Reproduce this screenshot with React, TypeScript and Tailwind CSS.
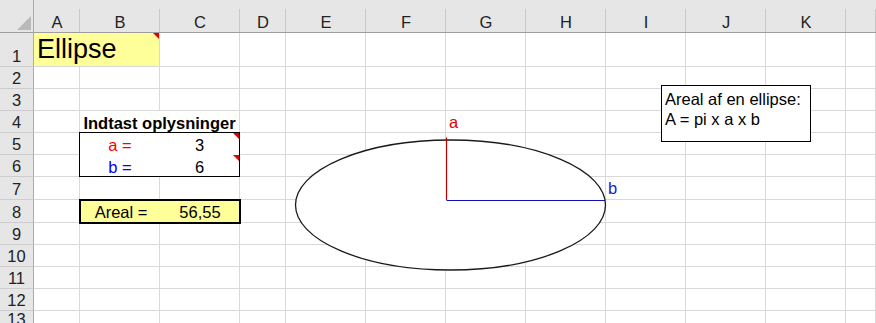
import clsx from "clsx"
import { twMerge } from "tailwind-merge"

const COLS = ["A", "B", "C", "D", "E", "F", "G", "H", "I", "J", "K", ""]

function Comment() {
  return (
    <span className="absolute top-0 right-0 w-0 h-0 border-l-[6px] border-l-transparent border-t-[6px] border-t-[#e00000]" />
  )
}

function Cell({ children, className }: { children?: React.ReactNode; className?: string }) {
  return (
    <div className={twMerge(clsx("relative flex items-end border-r border-b border-[#d9d9d9] bg-white pb-[1px] leading-4", className))}>
      {children}
    </div>
  )
}

function RowHead({ n }: { n: number }) {
  return (
    <div className="flex items-end justify-center bg-[#e6e6e6] border-r border-b border-r-[#ababab] border-b-[#cdcdcd] pb-[2px] leading-4 text-[#222]">
      {n}
    </div>
  )
}

function Blanks({ count }: { count: number }) {
  return (
    <>
      {Array.from({ length: count }).map((_, i) => (
        <Cell key={i} />
      ))}
    </>
  )
}

export default function App() {
  return (
    <div className="relative w-[876px] h-[323px] overflow-hidden bg-white font-['Liberation_Sans',Arial,sans-serif] text-[16.5px] text-black">
      <div className="grid grid-cols-[34px_46px_80px_80px_46px_repeat(7,80px)_1fr] grid-rows-[33px_34px_repeat(5,22px)_23px_23px_repeat(4,22px)_1fr] h-full">
        {/* column headers */}
        <div className="relative bg-[#e6e6e6] border-r border-b border-r-[#ababab] border-b-[#9e9e9e]">
          <span className="absolute right-[2px] bottom-[2px] w-0 h-0 border-l-[14px] border-l-transparent border-b-[14px] border-b-[#b9b9b9]" />
        </div>
        {COLS.map((c, i) => (
          <div key={i} className="relative flex items-end justify-center bg-[#e6e6e6] border-b border-b-[#9e9e9e] pb-[2px] leading-4 text-[#222]">
            {c}
            <span className="absolute right-0 top-[9px] bottom-0 w-px bg-[#c9c9c9]" />
          </div>
        ))}

        {/* row 1 */}
        <RowHead n={1} />
        <Cell className="col-span-2 bg-[#ffff99] pl-[3px] pb-[3px]">
          <span className="text-[27px] leading-none">Ellipse</span>
          <Comment />
        </Cell>
        <Blanks count={10} />

        <RowHead n={2} />
        <Blanks count={12} />
        <RowHead n={3} />
        <Blanks count={12} />

        {/* row 4 */}
        <RowHead n={4} />
        <Cell />
        <Cell className="col-span-2 justify-center font-bold">Indtast oplysninger</Cell>
        <Blanks count={9} />

        {/* rows 5-6 */}
        <RowHead n={5} />
        <Cell />
        <div className="relative z-10 col-span-2 row-span-2 -ml-px -mt-px border border-black bg-white grid grid-cols-[80px_1fr] grid-rows-[22px_1fr] leading-4">
          <div className="flex items-end justify-center pb-[2px] text-[#ff0000]">a =</div>
          <div className="relative flex items-end justify-center pb-[2px]">
            3
            <Comment />
          </div>
          <div className="flex items-end justify-center pb-[1px] text-[#0000ff]">b =</div>
          <div className="relative flex items-end justify-center pb-[1px]">
            6
            <Comment />
          </div>
        </div>
        <Blanks count={9} />
        <RowHead n={6} />
        <Cell />
        <Blanks count={9} />

        <RowHead n={7} />
        <Blanks count={12} />

        {/* row 8 */}
        <RowHead n={8} />
        <Cell />
        <div className="relative z-10 col-span-2 -m-px border-2 border-black bg-[#ffff99] grid grid-cols-[80px_1fr] leading-4">
          <div className="flex items-end justify-center pb-[2px]">Areal =</div>
          <div className="flex items-end justify-center pb-[2px]">56,55</div>
        </div>
        <Blanks count={9} />

        {[9, 10, 11, 12, 13].map((n) => (
          <div key={n} className="contents">
            <RowHead n={n} />
            <Blanks count={12} />
          </div>
        ))}
      </div>

      {/* drawing layer */}
      <svg className="absolute inset-0 z-20 pointer-events-none" width="876" height="323" viewBox="0 0 876 323">
        <ellipse cx="450.5" cy="205" rx="155" ry="65" fill="white" stroke="#1a1a1a" strokeWidth="1.3" />
        <line x1="446.5" y1="137.5" x2="446.5" y2="200" stroke="#c00000" strokeWidth="1.2" />
        <line x1="446.5" y1="200.5" x2="605" y2="200.5" stroke="#1010b8" strokeWidth="1.2" />
      </svg>
      <span className="absolute z-20 left-[449px] top-[114px] leading-4 text-[#e00000]">a</span>
      <span className="absolute z-20 left-[608px] top-[180px] leading-4 text-[#1a1ad0]">b</span>

      <div className="absolute z-20 left-[661px] top-[85px] w-[150px] h-[57px] border border-black bg-white pl-[3px] pt-[3px] leading-5">
        <div>Areal af en ellipse:</div>
        <div>A = pi x a x b</div>
      </div>
    </div>
  )
}
